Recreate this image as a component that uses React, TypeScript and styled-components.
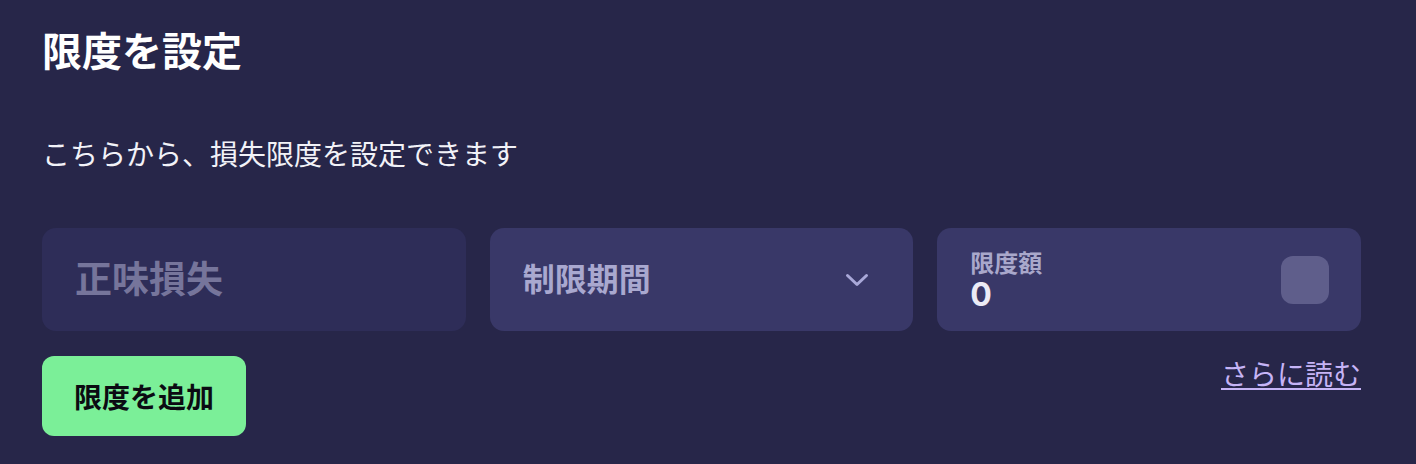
import React from "react";
import styled, { createGlobalStyle } from "styled-components";

const GlobalStyle = createGlobalStyle`
  html, body {
    margin: 0;
    padding: 0;
    background: #272649;
  }

  body {
    font-family: "Noto Sans CJK JP", "Noto Sans", sans-serif;
    color: #ffffff;
  }
`;

const Page = styled.section`
  box-sizing: border-box;
  width: 1416px;
  height: 464px;
  padding: 25px 55px 0 42px;
  display: flex;
  flex-direction: column;
  background: #272649;
`;

const Title = styled.h2`
  margin: 0;
  font-size: 40px;
  line-height: 48px;
  font-weight: 700;
  color: #ffffff;
`;

const Description = styled.p`
  margin: 60px 0 0;
  font-size: 28px;
  line-height: 40px;
  font-weight: 400;
  color: #f2f2f8;
`;

const Fields = styled.div`
  margin-top: 55px;
  display: grid;
  grid-template-columns: repeat(3, 1fr);
  gap: 24px;
`;

const Field = styled.div<{ $muted?: boolean }>`
  box-sizing: border-box;
  height: 103px;
  border-radius: 14px;
  background: ${({ $muted }) => ($muted ? "#2e2d58" : "#393868")};
  display: flex;
  align-items: center;
  padding: 0 32px 0 33px;
`;

const Placeholder = styled.span`
  padding-bottom: 5px;
  font-size: 37px;
  font-weight: 700;
  color: #76759b;
`;

const SelectText = styled.span`
  flex: 1;
  padding-bottom: 5px;
  font-size: 32px;
  font-weight: 700;
  color: #a9a8cf;
`;

const Chevron = styled.svg`
  width: 24px;
  height: 14px;
  margin-right: 12px;
`;

const AmountBox = styled.div`
  flex: 1;
  display: flex;
  flex-direction: column;
`;

const AmountLabel = styled.span`
  margin-bottom: 5px;
  font-size: 24px;
  line-height: 26px;
  font-weight: 700;
  color: #a9a8cb;
`;

const AmountValue = styled.span`
  font-family: "Inter", "Noto Sans", sans-serif;
  font-size: 32px;
  line-height: 30px;
  font-weight: 700;
  color: #ecebf6;
`;

const Toggle = styled.div`
  width: 48px;
  height: 48px;
  border-radius: 12px;
  background: #5f5e8b;
`;

const Footer = styled.div`
  margin-top: 25px;
  display: flex;
  justify-content: space-between;
  align-items: flex-start;
`;

const AddButton = styled.button`
  box-sizing: border-box;
  height: 80px;
  padding: 0 32px;
  border: none;
  border-radius: 12px;
  background: #7bef98;
  font-family: "Noto Sans CJK JP", sans-serif;
  font-size: 28px;
  font-weight: 700;
  color: #0b0b12;
  cursor: pointer;
`;

const ReadMore = styled.a`
  margin-top: -1px;
  font-size: 28px;
  line-height: 36px;
  color: #c6b4f6;
  text-decoration: underline;
  text-decoration-thickness: 2px;
  text-underline-offset: 3px;
  cursor: pointer;
`;

const App: React.FC = () => {
  return (
    <>
      <GlobalStyle />
      <Page>
        <Title>限度を設定</Title>
        <Description>こちらから、損失限度を設定できます</Description>
        <Fields>
          <Field $muted>
            <Placeholder>正味損失</Placeholder>
          </Field>
          <Field>
            <SelectText>制限期間</SelectText>
            <Chevron viewBox="0 0 24 14" fill="none">
              <path
                d="M2.5 2.5 L12 11.5 L21.5 2.5"
                stroke="#a9a8d8"
                strokeWidth="3"
                strokeLinecap="round"
                strokeLinejoin="round"
              />
            </Chevron>
          </Field>
          <Field>
            <AmountBox>
              <AmountLabel>限度額</AmountLabel>
              <AmountValue>0</AmountValue>
            </AmountBox>
            <Toggle />
          </Field>
        </Fields>
        <Footer>
          <AddButton>限度を追加</AddButton>
          <ReadMore>さらに読む</ReadMore>
        </Footer>
      </Page>
    </>
  );
};

export default App;
